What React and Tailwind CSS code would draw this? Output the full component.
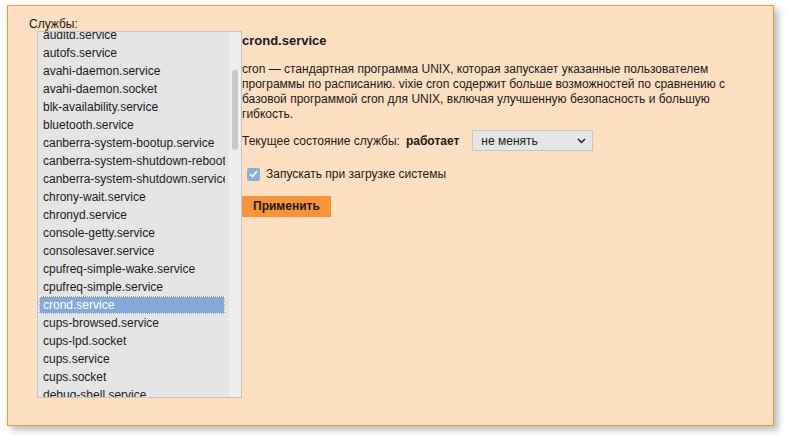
import React from "react";

const services = [
  "auditd.service",
  "autofs.service",
  "avahi-daemon.service",
  "avahi-daemon.socket",
  "blk-availability.service",
  "bluetooth.service",
  "canberra-system-bootup.service",
  "canberra-system-shutdown-reboot.service",
  "canberra-system-shutdown.service",
  "chrony-wait.service",
  "chronyd.service",
  "console-getty.service",
  "consolesaver.service",
  "cpufreq-simple-wake.service",
  "cpufreq-simple.service",
  "crond.service",
  "cups-browsed.service",
  "cups-lpd.socket",
  "cups.service",
  "cups.socket",
  "debug-shell.service",
  "dm-event.socket",
];

const selected = "crond.service";

const App = () => {
  return (
    <div className="w-[787px] h-[439px] bg-white pt-[5px] pl-[7px] font-['Liberation_Sans',Arial,sans-serif] text-[12px] text-[#1a1a1a]">
      <div className="w-[767px] h-[421px] bg-[#fddfc2] border border-[#f7963d] shadow-[4px_4px_7px_rgba(0,0,0,0.28)] flex gap-[1px] pt-[11px] pl-[21px]">
        {/* Services list */}
        <div className="flex flex-col w-[212px]">
          <div className="leading-[14px] h-[14px]">Службы:</div>
          <div className="ml-[8px] w-[205px] h-[367px] border border-[#c4c4c4] bg-[#e5e5e5] flex">
            <div className="flex-1 overflow-hidden">
              <div className="-mt-[6px] pl-[1px] pr-[4px]">
                {services.map((s) => (
                  <div
                    key={s}
                    className={
                      s === selected
                        ? "h-[18px] leading-[18px] pl-[4px] whitespace-nowrap overflow-hidden bg-[#86a9d9] text-white outline-1 outline-dotted outline-white -outline-offset-1"
                        : "h-[18px] leading-[18px] pl-[4px] whitespace-nowrap overflow-hidden"
                    }
                  >
                    {s}
                  </div>
                ))}
              </div>
            </div>
            <div className="w-[12px] bg-[#efefef] pt-[38px] flex justify-center">
              <div className="w-[6px] h-[80px] rounded-full bg-[#c8c8c8]" />
            </div>
          </div>
        </div>

        {/* Details */}
        <div className="flex flex-col pt-[16px] w-[500px]">
          <div className="font-bold text-[13px] leading-[16px]">crond.service</div>
          <p className="mt-[13px] leading-[15px] w-[490px]">
            cron — стандартная программа UNIX, которая запускает указанные пользователем
            программы по расписанию. vixie cron содержит больше возможностей по сравнению с
            базовой программой cron для UNIX, включая улучшенную безопасность и большую
            гибкость.
          </p>
          <div className="mt-[8px] flex items-center h-[21px]">
            <span>Текущее состояние службы:</span>
            <span className="ml-[6px] font-bold">работает</span>
            <div className="ml-[13px] w-[121px] h-[21px] bg-[#e6e6e6] border border-[#c6c6c6] flex items-center justify-between pl-[8px] pr-[6px]">
              <span>не менять</span>
              <svg width="9" height="6" viewBox="0 0 9 6" fill="none">
                <path d="M1 1l3.5 3.5L8 1" stroke="#222" strokeWidth="1.5" />
              </svg>
            </div>
          </div>
          <label className="mt-[16px] ml-[5px] flex items-center h-[14px]">
            <span className="w-[13px] h-[13px] rounded-[2px] bg-[#89aedb] flex items-center justify-center">
              <svg width="9" height="8" viewBox="0 0 9 8" fill="none">
                <path d="M1 4l2.5 2.5L8 1" stroke="white" strokeWidth="1.6" />
              </svg>
            </span>
            <span className="ml-[6px]">Запускать при загрузке системы</span>
          </label>
          <div className="mt-[15px]">
            <button className="h-[21px] px-[11px] bg-[#f99538] font-bold text-[12px] text-[#1a1a1a] leading-[21px]">
              Применить
            </button>
          </div>
        </div>
      </div>
    </div>
  );
};

export default App;
